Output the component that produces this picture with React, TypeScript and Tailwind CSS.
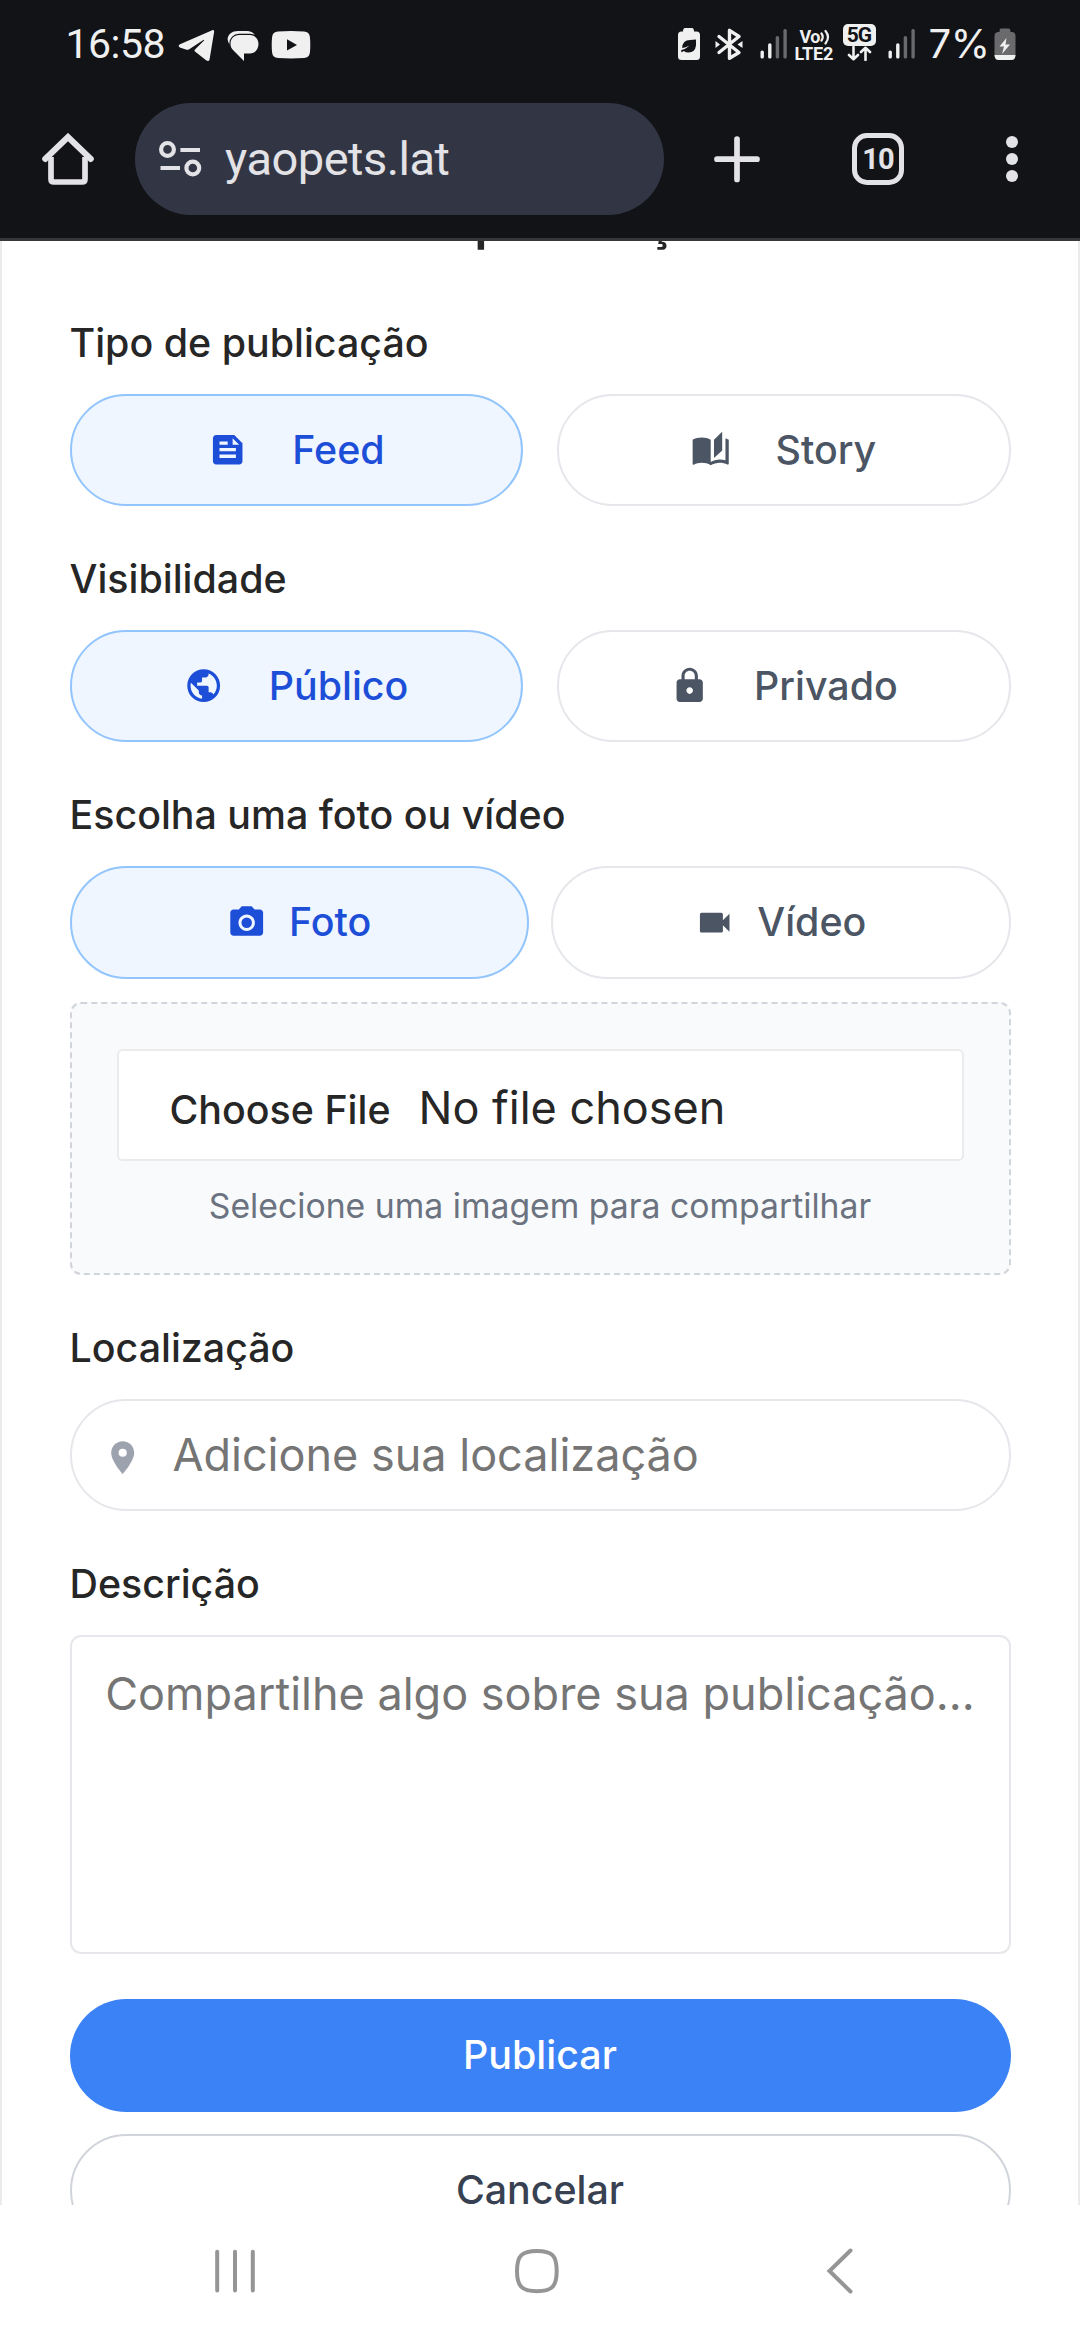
import React from "react";
import {
  MdFeed,
  MdAutoStories,
  MdPublic,
  MdLock,
  MdPhotoCamera,
  MdVideocam,
  MdLocationOn,
} from "react-icons/md";
import type { IconType } from "react-icons";

function Signal() {
  return (
    <svg width="28" height="30" viewBox="0 0 28 30" className="block">
      <rect x="0.5" y="21.5" width="3.4" height="8" rx="1.6" fill="#f0f0f0" />
      <rect x="8.1" y="14.3" width="3.4" height="15.2" rx="1.6" fill="#f0f0f0" />
      <rect x="15.7" y="7" width="3.4" height="22.5" rx="1.6" fill="#6a6a6c" />
      <rect x="23.4" y="0" width="3.4" height="29.5" rx="1.6" fill="#6a6a6c" />
    </svg>
  );
}

function StatusBar() {
  return (
    <div className="flex h-[88px] items-start pl-[65.5px] text-[#f0f0f0]">
      <span className="mt-[20px] w-[112.5px] font-['Roboto'] text-[41px] leading-[48px] tracking-[-0.5px]">
        16:58
      </span>
      <svg width="37" height="33" viewBox="0 0 37 33" className="mt-[29px] block">
        <path
          d="M2 15.2 L34.2 1.2 Q36.4 .6 36.1 3 L31.6 30.2 Q31 33 28.4 31.6 L17 22.6 Q16 21.7 17 20.6 L26 11.4 Q26.6 10.4 25.3 11 L11.2 20.2 Q9.6 21.2 7.8 20.5 L1.8 18.4 Q-.6 16.8 2 15.2 Z"
          fill="#f0f0f0"
        />
      </svg>
      <svg width="33" height="32" viewBox="0 0 33 32" className="ml-[12px] mt-[30px] block">
        <path d="M3 15 Q.6 12 .6 9 C1 4 5 1 11 1 H20 Q25 1 27.5 4.500 L20 12 Z" fill="#f0f0f0" />
        <path
          d="M12 5 H23 C28 5 31.500 9 31.500 14 S28 23.500 23 23.500 H17 V31 L6 20 C4 18 3.500 16 3.500 13.500 C3.500 9 7 5 12 5Z"
          fill="#f0f0f0"
          stroke="#111317"
          strokeWidth="2.400"
          paintOrder="stroke"
        />
      </svg>
      <svg width="40" height="28" viewBox="0 0 40 28" className="ml-[11px] mt-[31px] block">
        <path
          fillRule="evenodd"
          d="M7 .6 Q20 -.4 33 .6 Q38.400 1 38.900 6 Q39.700 14 38.900 21.500 Q38.400 26.600 33 27.100 Q20 28 7 27.100 Q1.600 26.600 1.100 21.500 Q.3 14 1.100 6 Q1.600 1 7 .6Z M16 8.200 V19.500 L26 13.900Z"
          fill="#f0f0f0"
        />
      </svg>
      <div className="ml-auto flex items-start pr-[64.5px]">
        <svg width="24" height="33" viewBox="0 0 24 33" className="mt-[28px] block">
          <path d="M8 0 H15 Q17 0 17 3.500 H19.500 Q23 3.500 23 7 V28.500 Q23 32 19.500 32 H4.500 Q1 32 1 28.500 V7 Q1 3.500 4.500 3.500 H6 Q6 0 8 0Z" fill="#f0f0f0" />
          <path d="M19 11.500 V17.500 Q18 24.500 11.500 24.500 Q8.500 24.500 7 23 Q5.500 24 4.300 24.300 V22 Q8 21.500 12.500 17.500 Q8.500 19.500 5.200 20 Q5.500 12 13 12Z" fill="#111317" />
        </svg>
        <svg width="28" height="33" viewBox="0 0 28 33" className="ml-[14px] mt-[28px] block">
          <path d="M4 8.500 L24 24.500 L14.500 30.300 V2.300 L24 8.500 L4 24.500" fill="none" stroke="#f0f0f0" strokeWidth="3.400" strokeLinecap="round" strokeLinejoin="round" />
          <path d="M0.500 13 L5 16.500 L0.500 20Z M27.500 13 L22.500 16.500 L27.500 20Z" fill="#f0f0f0" />
        </svg>
        <div className="ml-[17px] mt-[29px]">
          <Signal />
        </div>
        <div className="ml-[7px] mt-[28px] w-[42px] font-['Roboto'] text-[18px] font-bold leading-[17px]">
          <div className="flex items-center pl-[5px]">
            <span className="tracking-[-0.5px]">Vo</span>
            <svg width="11" height="16" viewBox="0 0 11 16" className="block">
              <path d="M1.500 4.500 Q4 8 1.500 11.500 M5.500 2 Q10.500 8 5.500 14.500" fill="none" stroke="#f0f0f0" strokeWidth="2.200" strokeLinecap="round" />
            </svg>
          </div>
          <div className="tracking-[-0.2px]">LTE2</div>
        </div>
        <div className="ml-[6px] mt-[24px] flex w-[33px] flex-col items-center">
          <div className="flex h-[22px] w-[33px] items-center justify-center rounded-[5px] bg-[#f0f0f0] font-['Roboto'] text-[21px] font-bold leading-none tracking-[-1px] text-[#111317]">
            5G
          </div>
          <svg width="26" height="15" viewBox="0 0 26 15" className="block">
            <path d="M7.500 1 V13 M3 9 L7.500 13.200 L12 9 M19.500 14 V2 M15 6 L19.500 1.800 L24 6" fill="none" stroke="#f0f0f0" strokeWidth="2.600" strokeLinecap="round" strokeLinejoin="round" />
          </svg>
        </div>
        <div className="ml-[12px] mt-[29px]">
          <Signal />
        </div>
        <span className="ml-[13px] mt-[20px] w-[61px] text-[40px] leading-[48px] tracking-[-0.5px]">7%</span>
        <svg width="22" height="33" viewBox="0 0 22 33" className="ml-[4px] mt-[28px] block">
          <path d="M7 .6 H14.500 Q16.500 .6 16.500 4 H18.500 Q21.500 4.500 21.500 8 V28 H.5 V8 Q.5 4.500 4 4 H5.500 Q5.500 .6 7 .6Z" fill="#6a6a6c" />
          <path d="M.5 27 H21.500 Q21.500 32 17.500 32 H4.500 Q.5 32 .5 27Z" fill="#f0f0f0" />
          <path d="M12.500 10 L5.500 18.500 H10 L8 26 L16 16.500 H11.500Z" fill="#f0f0f0" />
        </svg>
      </div>
    </div>
  );
}

function BrowserBar() {
  return (
    <div className="flex h-[150px] items-start pl-[42px] pt-[15px]">
      <svg width="52" height="53" viewBox="0 0 52 53" className="mt-[30px] block">
        <path d="M9 24 V46 Q9 49 12 49 H40 Q43 49 43 46 V24" fill="none" stroke="#e3e2e6" strokeWidth="5.700" />
        <path d="M3.200 26 L26 4 L48.800 26" fill="none" stroke="#e3e2e6" strokeWidth="6" strokeLinecap="round" />
      </svg>
      <div className="ml-[41px] flex h-[112px] w-[529px] items-center rounded-full bg-[#323644] pl-[24px]">
        <svg width="44" height="38" viewBox="0 0 44 38" className="block">
          <g fill="none" stroke="#e3e2e6" strokeWidth="4.200">
            <circle cx="8.500" cy="9.400" r="6.400" />
            <circle cx="33.800" cy="28" r="6.400" />
            <path d="M21.400 10 H41 M1.500 28 H21" />
          </g>
        </svg>
        <span className="ml-[22px] font-['Roboto'] text-[47px] leading-[56px] tracking-[-0.5px] text-[#e3e2e6]">yaopets.lat</span>
      </div>
      <svg width="46" height="47" viewBox="0 0 46 47" className="ml-[50px] mt-[33px] block">
        <path d="M23 3 V43.500 M3 23.200 H43" fill="none" stroke="#e3e2e6" strokeWidth="5.700" strokeLinecap="round" />
      </svg>
      <div className="ml-[92px] mt-[30px] flex h-[52px] w-[52px] items-center justify-center rounded-[15px] border-[5.5px] border-[#e3e2e6] font-['Roboto'] text-[29px] font-bold leading-none tracking-[-1px] text-[#e3e2e6]">
        10
      </div>
      <div className="ml-[102px] mt-[33px] flex flex-col gap-[5px]">
        <span className="size-[12px] rounded-full bg-[#e3e2e6]" />
        <span className="size-[12px] rounded-full bg-[#e3e2e6]" />
        <span className="size-[12px] rounded-full bg-[#e3e2e6]" />
      </div>
    </div>
  );
}

function Choice({ icon: Icon, label, selected, wide }: { icon: IconType; label: string; selected?: boolean; wide?: boolean }) {
  return (
    <button
      className={
        "flex h-[112.5px] flex-1 items-center justify-center rounded-full border-2 text-[39.375px] font-medium leading-[56px] " +
        (wide ? "gap-[45px] " : "gap-[22.5px] ") +
        (selected ? "border-[#93c5fd] bg-[#eff6ff] text-[#1d4ed8]" : "border-[#e5e7eb] bg-white text-[#4b5563]")
      }
    >
      <Icon className="size-[39.4px]" />
      <span>{label}</span>
    </button>
  );
}

function Label({ children }: { children: React.ReactNode }) {
  return <div className="text-[39.375px] font-medium leading-[56.25px] text-[#262626]">{children}</div>;
}

function NavBar() {
  return (
    <div className="flex h-[135px] items-start bg-white pt-[42px]">
      <svg width="42" height="46" viewBox="0 0 42 46" className="ml-[215px] block">
        <path d="M2.200 4.800 V43.500 M20 4.800 V43.500 M37.800 4.800 V43.500" stroke="#959595" strokeWidth="4" strokeLinecap="round" />
      </svg>
      <svg width="46" height="48" viewBox="0 0 46 48" className="ml-[257px] block">
        <path d="M23 4 C38 4 42.700 8.500 42.700 24 S38 44.200 23 44.200 S3 39.500 3 24 S8 4 23 4Z" fill="none" stroke="#959595" strokeWidth="4" />
      </svg>
      <svg width="28" height="48" viewBox="0 0 28 48" className="ml-[266px] block">
        <path d="M24.500 3.500 L3.500 24 L24.500 44.500" fill="none" stroke="#959595" strokeWidth="4" strokeLinecap="round" />
      </svg>
    </div>
  );
}

export default function App() {
  return (
    <div className="flex h-[2340px] w-[1080px] flex-col overflow-hidden bg-white font-['Inter',sans-serif]">
      <header className="h-[241px] shrink-0 border-b-[3px] border-[#36373a] bg-[#111317]">
        <StatusBar />
        <BrowserBar />
      </header>

      <main className="h-[1964px] shrink-0 overflow-hidden border-x-2 border-[#ebebeb] bg-white px-[67.5px]">
        <h1 className="-mt-[44px] mb-[67.2px] text-center text-[50.6px] font-semibold leading-[50.6px] tracking-[-0.025em] text-[#262626]">
          Criar publicação
        </h1>

        <section>
          <Label>Tipo de publicação</Label>
          <div className="mt-[22.5px] flex gap-[33.75px]">
            <Choice icon={MdFeed} label="Feed" selected wide />
            <Choice icon={MdAutoStories} label="Story" wide />
          </div>
        </section>

        <section className="mt-[45px]">
          <Label>Visibilidade</Label>
          <div className="mt-[22.5px] flex gap-[33.75px]">
            <Choice icon={MdPublic} label="Público" selected wide />
            <Choice icon={MdLock} label="Privado" wide />
          </div>
        </section>

        <section className="mt-[45px]">
          <Label>Escolha uma foto ou vídeo</Label>
          <div className="mt-[22.5px] flex gap-[22.5px]">
            <Choice icon={MdPhotoCamera} label="Foto" selected />
            <Choice icon={MdVideocam} label="Vídeo" />
          </div>
          <div className="mt-[23.5px] h-[273px] rounded-[11.25px] border-2 border-dashed border-[#d1d5db] bg-[#f9fafb] px-[45px] pt-[45px]">
            <div className="flex h-[112px] items-baseline rounded-[5.6px] border-2 border-[#ebebeb] bg-white pl-[51px] pt-[29px] leading-[56px] text-[#262626]">
              <span className="text-[39.375px] font-medium">Choose File</span>
              <span className="ml-[28px] text-[45px]">No file chosen</span>
            </div>
            <p className="mt-[22px] text-center text-[33.75px] leading-[45px] text-[#6b7280]">
              Selecione uma imagem para compartilhar
            </p>
          </div>
        </section>

        <section className="mt-[45px]">
          <Label>Localização</Label>
          <div className="mt-[22.5px] flex h-[112.5px] items-center rounded-full border-2 border-[#e5e7eb] pl-[31.5px]">
            <MdLocationOn className="mt-[5px] size-[39.4px] text-[#9ca3af]" />
            <span className="ml-[30px] text-[45px] leading-[56px] text-[#757575]">Adicione sua localização</span>
          </div>
        </section>

        <section className="mt-[45px]">
          <Label>Descrição</Label>
          <div className="mt-[22.5px] h-[319px] rounded-[11.25px] border-2 border-[#e5e7eb] px-[33.75px] pt-[22.5px] text-[45px] leading-[67.5px] whitespace-nowrap text-[#757575]">
            Compartilhe algo sobre sua publicação...
          </div>
        </section>

        <div className="mt-[45px] flex flex-col gap-[22.5px]">
          <button className="h-[112.5px] rounded-full bg-[#3b82f6] text-[39.375px] font-medium leading-[56px] text-white">
            Publicar
          </button>
          <button className="h-[112.5px] rounded-full border-2 border-[#d1d5db] bg-white text-[39.375px] font-medium leading-[56px] text-[#374151]">
            Cancelar
          </button>
        </div>
      </main>

      <NavBar />
    </div>
  );
}
